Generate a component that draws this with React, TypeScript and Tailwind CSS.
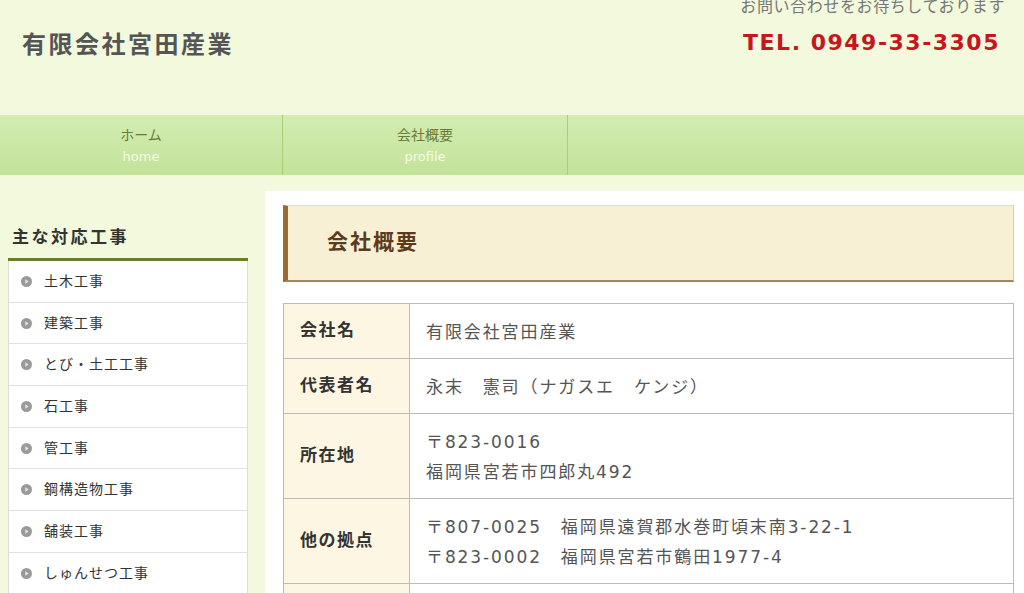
const jp = '[font-family:"DejaVu_Sans","Noto_Sans_CJK_JP",sans-serif]';

const works = [
  '土木工事',
  '建築工事',
  'とび・土工工事',
  '石工事',
  '管工事',
  '鋼構造物工事',
  '舗装工事',
  'しゅんせつ工事',
];

type Row = { label: string; lines: string[] };

const rows: Row[] = [
  { label: '会社名', lines: ['有限会社宮田産業'] },
  { label: '代表者名', lines: ['永末　憲司（ナガスエ　ケンジ）'] },
  { label: '所在地', lines: ['〒823-0016', '福岡県宮若市四郎丸492'] },
  {
    label: '他の拠点',
    lines: ['〒807-0025　福岡県遠賀郡水巻町頃末南3-22-1', '〒823-0002　福岡県宮若市鶴田1977-4'],
  },
  { label: '設立', lines: ['　'] },
];

function Bullet() {
  return (
    <svg width="11" height="11" viewBox="0 0 11 11" className="shrink-0">
      <circle cx="5.5" cy="5.5" r="5.5" fill="#9a9a9a" />
      <path d="M4.3 3.2 L7.6 5.5 L4.3 7.8 Z" fill="#e6e6e6" />
    </svg>
  );
}

export default function App() {
  return (
    <div className={`w-[1024px] h-[593px] overflow-hidden bg-[#f2f9dc] ${jp}`}>
      <header className="h-[115px] flex justify-between">
        <h1 className="pl-[22px] pt-[27px] text-[24px] leading-[36px] font-bold text-[#555555] tracking-[2.5px]">
          有限会社宮田産業
        </h1>
        <div className="pr-[19px] flex flex-col items-end">
          <p className="-mt-[5px] text-[16px] leading-[24px] tracking-[0.6px] text-[#777777]">お問い合わせをお待ちしております</p>
          <p className="mt-[9px] mr-[5px] text-[22px] leading-[30px] font-bold text-[#c8161d] tracking-[1.5px]">
            TEL. 0949-33-3305
          </p>
        </div>
      </header>

      <nav className="h-[60px] flex bg-gradient-to-b from-[#d3edb2] to-[#c2e398]">
        <a className="w-[283px] border-r border-[#a9cf7c] flex flex-col items-center pt-[9px] text-[14px] leading-[22px]">
          <span className="text-[#6a7a3c]">ホーム</span>
          <span className="text-[#f6fbe9] text-[13px]">home</span>
        </a>
        <a className="w-[285px] border-r border-[#a9cf7c] flex flex-col items-center pt-[9px] text-[14px] leading-[22px]">
          <span className="text-[#6a7a3c]">会社概要</span>
          <span className="text-[#f6fbe9] text-[13px]">profile</span>
        </a>
      </nav>

      <div className="flex mt-[16px]">
        <aside className="w-[265px] shrink-0 pl-[8px] pr-[17px] pt-[34px]">
          <h2 className="pl-[4px] pb-[9px] text-[17px] leading-[24px] tracking-[2.5px] font-bold text-[#333333] border-b-[3px] border-[#6b7c2d]">
            主な対応工事
          </h2>
          <ul className="bg-white border-x border-[#dddddd]">
            {works.map((w) => (
              <li
                key={w}
                className="h-[41.7px] flex items-center gap-[12px] pl-[12px] border-b border-[#e2e2e2] text-[14px] tracking-[1px] text-[#333333]"
              >
                <Bullet />
                <span>{w}</span>
              </li>
            ))}
          </ul>
        </aside>

        <main className="flex-1 bg-white pl-[18px] pr-[10px] pt-[14px] h-[420px]">
          <div className="h-[77px] bg-[#f8f0d5] border-l-[5px] border-l-[#9a6a32] border-t border-t-[#dddddd] border-r border-r-[#cccccc] border-b-2 border-b-[#a5865a] flex items-center pl-[39px]">
            <h2 className="text-[21px] tracking-[2px] font-bold text-[#5b3b1c]">会社概要</h2>
          </div>

          <table className="mt-[21px] w-full border-collapse">
            <tbody>
              {rows.map((r) => (
                <tr key={r.label}>
                  <th className="w-[126px] bg-[#fdf6e2] border border-[#bbbbbb] text-left align-middle pl-[16px] text-[17px] tracking-[1.5px] font-bold text-[#333333]">
                    {r.label}
                  </th>
                  <td className="border border-[#bbbbbb] pl-[16px] pt-[13px] pb-[11px] text-[17px] leading-[30px] tracking-[1.9px] text-[#555555]">
                    {r.lines.map((l) => (
                      <div key={l}>{l}</div>
                    ))}
                  </td>
                </tr>
              ))}
            </tbody>
          </table>
        </main>
      </div>
    </div>
  );
}
